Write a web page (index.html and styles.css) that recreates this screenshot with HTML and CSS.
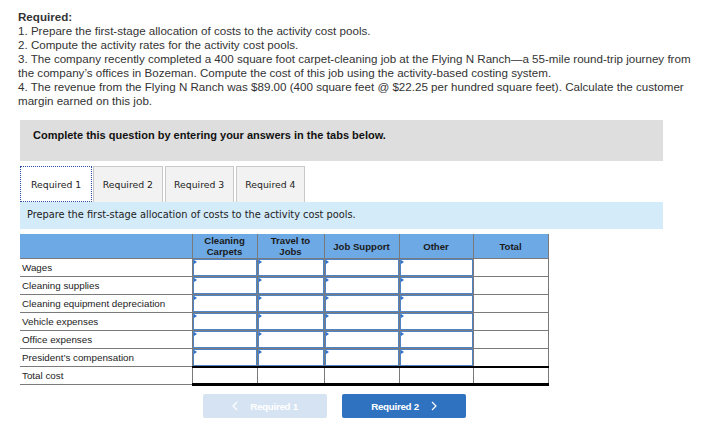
FILE: index.html
```html
<!DOCTYPE html>
<html>
<head>
<meta charset="utf-8">
<link rel="stylesheet" href="styles.css">
</head>
<body>
<div class="page">
  <div class="intro">
    <div class="req">Required:</div>
    <div>1. Prepare the first-stage allocation of costs to the activity cost pools.</div>
    <div>2. Compute the activity rates for the activity cost pools.</div>
    <div>3. The company recently completed a 400 square foot carpet-cleaning job at the Flying N Ranch—a 55-mile round-trip journey from the company’s offices in Bozeman. Compute the cost of this job using the activity-based costing system.</div>
    <div>4. The revenue from the Flying N Ranch was $89.00 (400 square feet @ $22.25 per hundred square feet). Calculate the customer margin earned on this job.</div>
  </div>
  <div class="notice">Complete this question by entering your answers in the tabs below.</div>
  <div class="tabs">
    <div class="tab active">Required 1</div>
    <div class="tab">Required 2</div>
    <div class="tab">Required 3</div>
    <div class="tab">Required 4</div>
  </div>
  <div class="instr">Prepare the first-stage allocation of costs to the activity cost pools.</div>
  <table class="grid">
    <colgroup>
      <col class="c-label"><col class="c1"><col class="c2"><col class="c3"><col class="c4"><col class="c5">
    </colgroup>
    <thead>
      <tr>
        <th class="lbl"></th>
        <th>Cleaning<br>Carpets</th>
        <th>Travel to<br>Jobs</th>
        <th>Job Support</th>
        <th>Other</th>
        <th>Total</th>
      </tr>
    </thead>
    <tbody>
      <tr><td class="lbl">Wages</td><td class="in"><div class="box"></div></td><td class="in"><div class="box"></div></td><td class="in"><div class="box"></div></td><td class="in"><div class="box"></div></td><td></td></tr>
      <tr><td class="lbl">Cleaning supplies</td><td class="in"><div class="box"></div></td><td class="in"><div class="box"></div></td><td class="in"><div class="box"></div></td><td class="in"><div class="box"></div></td><td></td></tr>
      <tr><td class="lbl">Cleaning equipment depreciation</td><td class="in"><div class="box"></div></td><td class="in"><div class="box"></div></td><td class="in"><div class="box"></div></td><td class="in"><div class="box"></div></td><td></td></tr>
      <tr><td class="lbl">Vehicle expenses</td><td class="in"><div class="box"></div></td><td class="in"><div class="box"></div></td><td class="in"><div class="box"></div></td><td class="in"><div class="box"></div></td><td></td></tr>
      <tr><td class="lbl">Office expenses</td><td class="in"><div class="box"></div></td><td class="in"><div class="box"></div></td><td class="in"><div class="box"></div></td><td class="in"><div class="box"></div></td><td></td></tr>
      <tr><td class="lbl">President’s compensation</td><td class="in"><div class="box"></div></td><td class="in"><div class="box"></div></td><td class="in"><div class="box"></div></td><td class="in"><div class="box"></div></td><td></td></tr>
      <tr class="total"><td class="lbl">Total cost</td><td></td><td></td><td></td><td></td><td></td></tr>
    </tbody>
  </table>
  <div class="nav">
    <div class="btn prev"><svg class="chev" width="6" height="10" viewBox="0 0 6 10"><path d="M5 1 L1 5 L5 9" fill="none" stroke="#fff" stroke-width="1.2"/></svg><span>Required 1</span></div>
    <div class="btn next"><span>Required 2</span><svg class="chev" width="6" height="10" viewBox="0 0 6 10"><path d="M1 1 L5 5 L1 9" fill="none" stroke="#fff" stroke-width="1.2"/></svg></div>
  </div>
</div>
</body>
</html>
```
FILE: styles.css
```css
html, body { margin: 0; padding: 0; background: #fff; }
.page {
  padding: 10px 0 0 18px;
  font-family: "Liberation Sans", Arial, sans-serif;
  color: #333;
}
.intro {
  font-size: 11.6px;
  line-height: 14px;
  width: 690px;
}
.req { font-weight: bold; }
.notice {
  margin: 12px 0 0 2px;
  width: 643px;
  height: 41px;
  box-sizing: border-box;
  padding: 9px 13px 0;
  background: #dedede;
  font-size: 11px;
  font-weight: bold;
  color: #111;
}
.tabs {
  display: flex;
  gap: 2px;
  margin: 5px 0 0 2px;
  height: 36px;
}
.tab {
  box-sizing: border-box;
  height: 36px;
  padding: 0 8.5px;
  display: flex;
  align-items: center;
  background: #f2f2f2;
  border: 1px solid #c9c9c9;
  border-bottom: none;
  font-family: "DejaVu Sans", Verdana, sans-serif;
  font-size: 9.3px;
  color: #222;
}
.tab.active {
  background: #fff;
  border: 1px dotted #2b4fa0;
  padding: 0 10px 0 10px;
  margin-right: -1px;
}
.instr {
  margin-left: 2px;
  width: 643px;
  height: 27px;
  box-sizing: border-box;
  padding: 7px 7px 0;
  background: #d4ebf9;
  font-family: "DejaVu Sans", Verdana, sans-serif;
  font-size: 9.8px;
  color: #222;
}
.grid {
  margin: 5px 0 0 2px;
  border-collapse: collapse;
  table-layout: fixed;
  width: 528px;
  font-size: 9.8px;
}
.c-label { width: 172px; }
.c1 { width: 65px; }
.c2 { width: 67px; }
.c3 { width: 75px; }
.c4 { width: 74px; }
.c5 { width: 75px; }
.grid th {
  background: #6da9e5;
  height: 24px;
  padding: 0;
  font-size: 9.6px;
  line-height: 11px;
  font-weight: bold;
  color: #1a1a1a;
  border: 1px solid #7a7a7a;
  border-top: none;
}
.grid th.lbl { border-left: none; }
.grid td {
  height: 18px;
  padding: 0;
  border: 1px solid #7a7a7a;
  box-sizing: border-box;
  color: #222;
}
.grid td.lbl {
  border-left: none;
  padding-left: 2px;
}
.grid td.in { position: relative; }
.box {
  position: absolute;
  inset: 0;
  border: 1px solid #4f84c7;
}
.box::before {
  content: "";
  position: absolute;
  left: 0;
  top: 0;
  width: 0;
  height: 0;
  border-top: 2px solid transparent;
  border-bottom: 2px solid transparent;
  border-left: 3px solid #2c6fc9;
}
.grid tr.total td { border-top: 2px solid #000; border-bottom: 3px solid #000; }
.grid tr.total td.lbl { border-top: 1px solid #7a7a7a; border-bottom: 1px solid #7a7a7a; }
.nav {
  display: flex;
  gap: 15px;
  margin: 8px 0 0 185px;
}
.btn {
  width: 124px;
  height: 24px;
  border-radius: 2px;
  display: flex;
  align-items: center;
  justify-content: center;
  gap: 12px;
  color: #fff;
  font-weight: bold;
  font-size: 9.8px;
  letter-spacing: -0.3px;
}
.prev { background: #d6e3f3; }
.next { background: #2e72c0; }
```
